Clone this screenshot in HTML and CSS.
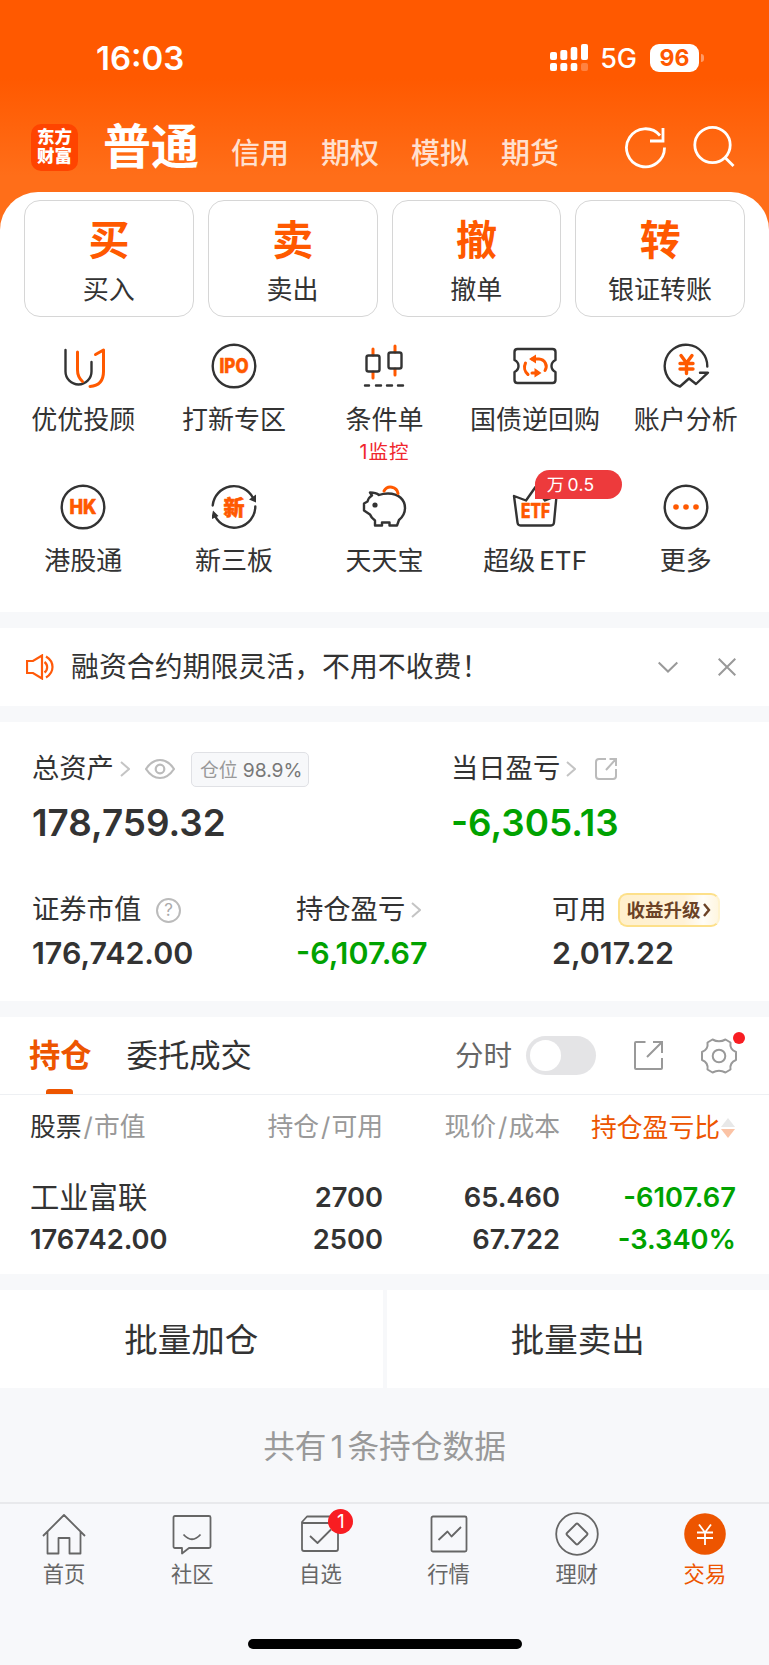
FILE: index.html
```html
<!DOCTYPE html>
<html lang="zh-CN">
<head>
    <meta charset="UTF-8">
    <meta name="viewport" content="width=device-width, initial-scale=1.0">
    <title>普通交易</title>
    <link rel="stylesheet" href="styles.css">
</head>
<body>
    <div class="header">
        <div class="status-bar">
            <div class="time">16:03</div>
            <div class="status-right">
                <svg class="signal" width="38" height="28" viewBox="0 0 38 28" fill="#fff">
                    <rect x="0" y="8" width="7" height="8" rx="2"/>
                    <rect x="10.3" y="6" width="7" height="10" rx="2"/>
                    <rect x="20.7" y="3" width="6.6" height="13" rx="2"/>
                    <rect x="31" y="0" width="7" height="16" rx="2"/>
                    <rect x="0" y="19" width="7" height="8" rx="2"/>
                    <rect x="10.3" y="19" width="7" height="8" rx="2"/>
                    <rect x="20.7" y="19" width="6.6" height="8" rx="2"/>
                    <rect x="31" y="19" width="7" height="8" rx="2" opacity="0.25"/>
                </svg>
                <span class="network">5G</span>
                <span class="battery">96</span>
                <span class="battery-cap"></span>
            </div>
        </div>
        <div class="nav">
            <div class="logo">东方<br>财富</div>
            <div class="nav-active">普通</div>
            <div class="nav-links">
                <span>信用</span>
                <span>期权</span>
                <span>模拟</span>
                <span>期货</span>
            </div>
            <div class="nav-icons">
                <svg width="44" height="44" viewBox="0 0 44 44" fill="none" stroke="#fff" stroke-width="2.8">
                    <path d="M41.5 22.5A19 19 0 1 1 37 10.5"/>
                    <path d="M40 3v13H27"/>
                </svg>
                <svg width="44" height="44" viewBox="0 0 44 44" fill="none" stroke="#fff" stroke-width="2.8">
                    <circle cx="20.5" cy="20" r="17.7"/>
                    <path d="M33 32.500l8.500 8.500"/>
                </svg>
            </div>
        </div>
    </div>

    <div class="panel">
        <div class="actions">
            <div class="action"><b>买</b><span>买入</span></div>
            <div class="action"><b>卖</b><span>卖出</span></div>
            <div class="action"><b>撤</b><span>撤单</span></div>
            <div class="action"><b>转</b><span>银证转账</span></div>
        </div>

        <div class="menu">
            <div class="menu-item">
                <svg class="icon" viewBox="0 0 48 48">
                    <path class="dark" d="M6.500 8v21.500a13 13 0 0 0 26 0V20"/>
                    <path class="orange" d="M18.500 10v18q0 7 5 11.500"/>
                    <path class="orange" d="M36.500 12.500l8-4.500v21.500q0 14-13.500 15"/>
                </svg>
                <span>优优投顾</span>
            </div>
            <div class="menu-item">
                <svg class="icon" viewBox="0 0 48 48">
                    <circle class="dark" cx="24" cy="24" r="21.300"/>
                    <text x="24" y="31" textLength="29" lengthAdjust="spacingAndGlyphs">IPO</text>
                </svg>
                <span>打新专区</span>
            </div>
            <div class="menu-item">
                <svg class="icon" viewBox="0 0 48 48">
                    <path class="orange" d="M13 7v6M13 30v6M35 4v6M35 27v6"/>
                    <rect class="dark" x="6.500" y="13.500" width="13" height="16" rx="2"/>
                    <rect class="dark" x="28.500" y="10.500" width="13" height="16" rx="2"/>
                    <path class="dark" d="M5 43.500h4M16 43.500h5M27 43.500h5M38 43.500h5"/>
                </svg>
                <span>条件单</span>
                <em>1监控</em>
            </div>
            <div class="menu-item">
                <svg class="icon" viewBox="0 0 48 48">
                    <path class="dark" d="M6.500 7h35q3 0 3 3v8q-4 2-4 6t4 6v8q0 3-3 3h-35q-3 0-3-3v-8q4-2 4-6t-4-6v-8q0-3 3-3z"/>
                    <path class="orange" d="M17 32.500a9.500 9.500 0 0 1-2.500-11.500M21 17h7a7.500 7.500 0 0 1 6 11.500M27 31h-6"/>
                    <path class="fill-orange" d="M18 17l7-4.500v9zM30.500 31l-7-5v9.500z"/>
                </svg>
                <span>国债逆回购</span>
            </div>
            <div class="menu-item">
                <svg class="icon" viewBox="0 0 48 48">
                    <path class="dark" d="M45.300 24.500A21.300 21.300 0 1 0 18 44.500L27 36.500l7 5.500 12-11.300h-8"/>
                    <path class="yen" d="M19 13.500l5.500 7.500 5.500-7.500M24.500 21v10.500M18 21.500h13M18 27h13"/>
                </svg>
                <span>账户分析</span>
            </div>
            <div class="menu-item">
                <svg class="icon" viewBox="0 0 48 48">
                    <circle class="dark" cx="24" cy="24" r="21.300"/>
                    <text x="24" y="31.200" textLength="27" lengthAdjust="spacingAndGlyphs">HK</text>
                </svg>
                <span>港股通</span>
            </div>
            <div class="menu-item">
                <svg class="icon" viewBox="0 0 48 48">
                    <path class="dark" d="M2.700 22.500A21.300 21.300 0 0 1 43 15M45.300 23.500A21.300 21.300 0 0 1 5 33"/>
                    <path class="fill-dark" d="M46 11.500v8l-7-3zM2 36v-3.500l1-5 5.500 5.500z"/>
                    <text x="24" y="31.500" class="cn">新</text>
                </svg>
                <span>新三板</span>
            </div>
            <div class="menu-item">
                <svg class="icon" viewBox="0 0 48 48">
                    <path class="dark" d="M10 9.500q6 0 9 2.500 4-1.500 9-1.500c11 0 17 6.500 17 14.500q0 7-6 12l-2 5.500h-7.500v-3H22v3h-7v-5q-4-3-5-6l-6-4v-7l3.500-2q1-4 4.500-6z"/>
                    <path class="orange" d="M24 8a7.500 7.500 0 0 1 14 2.500"/>
                    <circle class="fill-dark" cx="15" cy="22" r="2.600"/>
                </svg>
                <span>天天宝</span>
            </div>
            <div class="menu-item">
                <svg class="icon" viewBox="0 0 48 48">
                    <path class="dark" d="M3 13l12 4.500L24.500 4l9.500 13.500L45.500 13 43 39.500q-.3 3-3 3H9.500q-2.700 0-3-3z"/>
                    <text x="24.500" y="35.200" textLength="29" lengthAdjust="spacingAndGlyphs">ETF</text>
                </svg>
                <span>超级<u>ETF</u></span>
                <i class="tag">万<u>0.5</u></i>
            </div>
            <div class="menu-item">
                <svg class="icon" viewBox="0 0 48 48">
                    <circle class="dark" cx="24" cy="24" r="21.300"/>
                    <g class="fill-orange">
                        <circle cx="14" cy="24" r="2.800"/>
                        <circle cx="24" cy="24" r="2.800"/>
                        <circle cx="34" cy="24" r="2.800"/>
                    </g>
                </svg>
                <span>更多</span>
            </div>
        </div>
    </div>

    <div class="notice">
        <svg width="28" height="26" viewBox="0 0 28 26" fill="none" stroke="#ff5a0a" stroke-width="2.200">
            <path d="M1 7h6l9-5.500v23L7 19H1z"/>
            <path d="M18.500 8a6.500 6.500 0 0 1 0 10.500M20 2.500q6.500 4 6.500 10.500T20 23.500"/>
        </svg>
        <span class="notice-text">融资合约期限灵活，不用不收费！</span>
        <svg width="20" height="12" viewBox="0 0 20 12" fill="none" stroke="#999" stroke-width="2">
            <path d="M.7 1.500l9.300 9 9.300-9"/>
        </svg>
        <svg width="18" height="18" viewBox="0 0 18 18" fill="none" stroke="#999" stroke-width="2">
            <path d="M.7.700l16.600 16.600M17.300.700L.7 17.300"/>
        </svg>
    </div>

    <div class="assets">
        <div class="assets-top">
            <div>
                <div class="label">
                    总资产
                    <svg class="chevron" width="10" height="16" viewBox="0 0 10 16"><path d="M1 1l8 7-8 7"/></svg>
                    <svg class="eye" width="30" height="22" viewBox="0 0 30 22" fill="none" stroke="#bbb" stroke-width="2.200">
                        <path d="M1 11Q7 2 15 2t14 9q-6 9-14 9T1 11z"/>
                        <circle cx="15" cy="11" r="4.300"/>
                    </svg>
                    <span class="ratio">仓位 <b>98.9%</b></span>
                </div>
                <div class="value">178,759.32</div>
            </div>
            <div>
                <div class="label">
                    当日盈亏
                    <svg class="chevron" width="10" height="16" viewBox="0 0 10 16"><path d="M1 1l8 7-8 7"/></svg>
                    <svg class="share" width="22" height="22" viewBox="0 0 22 22" fill="none" stroke="#bbb" stroke-width="2">
                        <path d="M11 1H4Q1 1 1 4v14q0 3 3 3h14q3 0 3-3v-7M11 12L20.500 1.500M14.500 1H21v7"/>
                    </svg>
                </div>
                <div class="value green">-6,305.13</div>
            </div>
        </div>
        <div class="assets-bottom">
            <div>
                <div class="label">证券市值<span class="help">?</span></div>
                <div class="value">176,742.00</div>
            </div>
            <div>
                <div class="label">
                    持仓盈亏
                    <svg class="chevron" width="10" height="16" viewBox="0 0 10 16"><path d="M1 1l8 7-8 7"/></svg>
                </div>
                <div class="value green">-6,107.67</div>
            </div>
            <div>
                <div class="label">
                    可用
                    <span class="upgrade">收益升级<svg width="8" height="14" viewBox="0 0 8 14" fill="none" stroke="#6b4226" stroke-width="2.400"><path d="M1 1l5 6-5 6"/></svg></span>
                </div>
                <div class="value">2,017.22</div>
            </div>
        </div>
    </div>

    <div class="holdings">
        <div class="tabs">
            <div class="tab active">持仓</div>
            <div class="tab">委托成交</div>
            <div class="tools">
                <span>分时</span>
                <div class="switch"></div>
                <svg class="export" width="31" height="31" viewBox="0 0 31 31" fill="none" stroke="#999" stroke-width="2">
                    <path d="M12.500 2H3Q2 2 2 3v25q0 1 1 1h25q1 0 1-1V18M14 17L28.500 2.500M20 2h9v11"/>
                </svg>
                <div class="gear">
                    <svg width="36" height="36" viewBox="0 0 36 36" fill="none" stroke="#999" stroke-width="2">
                        <path d="M11.500 1.500Q18 5 24.500 1.500L29.500 4.500Q28.500 11.500 35 14v8Q28.500 24.500 29.500 31.500L24.500 34.500Q18 31 11.500 34.500L6.500 31.500Q7.500 24.500 1 22v-8Q7.500 11.500 6.500 4.500z" stroke-linejoin="round"/>
                        <circle cx="18" cy="18" r="6.300"/>
                    </svg>
                    <span class="dot"></span>
                </div>
            </div>
        </div>
        <div class="row head">
            <span><b>股票</b><u>/</u>市值</span>
            <span>持仓<u>/</u>可用</span>
            <span>现价<u>/</u>成本</span>
            <span class="sort">持仓盈亏比<svg width="16" height="22" viewBox="0 0 16 22"><path d="M8 1l7 9H1z" fill="#e8e8e8"/><path d="M1 12h14l-7 9z" fill="#fbc3a5"/></svg></span>
        </div>
        <div class="row stock">
            <div><span class="name">工业富联</span><span>176742.00</span></div>
            <div><span>2700</span><span>2500</span></div>
            <div><span>65.460</span><span>67.722</span></div>
            <div class="green"><span>-6107.67</span><span>-3.340%</span></div>
        </div>
    </div>

    <div class="batch">
        <div>批量加仓</div>
        <div>批量卖出</div>
    </div>

    <div class="count">共有<u>1</u>条持仓数据</div>

    <div class="tabbar">
        <div class="tabbar-item">
            <svg viewBox="0 0 44 44">
                <path d="M1 24L22 3l21 21M5.500 20v21.500h11V26h11v15.500h11V20"/>
            </svg>
            <span>首页</span>
        </div>
        <div class="tabbar-item">
            <svg viewBox="0 0 44 44">
                <path d="M5 4h34q1.500 0 1.500 1.500v29q0 1.500-1.500 1.500H19l-7 5.500V36H5q-1.500 0-1.500-1.500v-29Q3.500 4 5 4zM13.500 22.500q8.500 9.500 17 0"/>
            </svg>
            <span>社区</span>
        </div>
        <div class="tabbar-item">
            <svg viewBox="0 0 44 44">
                <path d="M4 10l5-5.500h26l5 5.500v27q0 2-2 2H6q-2 0-2-2zM4 11h36M12 24l7.500 7L33 17.500"/>
            </svg>
            <span>自选</span>
            <i class="count-badge">1</i>
        </div>
        <div class="tabbar-item">
            <svg viewBox="0 0 44 44">
                <rect x="4.500" y="4.500" width="35" height="35" rx="1.500"/>
                <path d="M11.500 28l9-8.500 4 5L34 15"/>
            </svg>
            <span>行情</span>
        </div>
        <div class="tabbar-item">
            <svg viewBox="0 0 44 44">
                <circle cx="22" cy="22" r="20.800"/>
                <path d="M21 12L12 21q-1 1 0 2l9 9q1 1 2 0l9-9q1-1 0-2l-9-9q-1-1-2 0z"/>
            </svg>
            <span>理财</span>
        </div>
        <div class="tabbar-item current">
            <svg viewBox="0 0 44 44">
                <circle cx="22" cy="22" r="20.800"/>
                <path d="M16 12.500l6 8 6-8M22 20v13M14 20.500h16M14 26h16"/>
            </svg>
            <span>交易</span>
        </div>
    </div>
    <div class="home-indicator"></div>
</body>
</html>
```

FILE: styles.css
```css
* {
    box-sizing: border-box;
}

body {
    margin: 0;
    height: 1665px;
    font-family: Inter, "Noto Sans CJK SC", sans-serif;
    color: #333;
    background: #f7f8fa;
    display: flex;
    flex-direction: column;
    overflow: hidden;
}

svg {
    display: block;
    flex: none;
}

b, i, em, u {
    font-weight: inherit;
    font-style: normal;
    text-decoration: none;
}

/* header */
.header {
    height: 232px;
    flex: none;
    background: linear-gradient(#ff5900 0, #ff5900 78px, #ff6e19 176px);
    color: #fff;
}

.status-bar {
    height: 115px;
    padding: 0 65px 0 96px;
    display: flex;
    justify-content: space-between;
    align-items: center;
}

.time {
    font-size: 33px;
    font-weight: 600;
}

.status-right {
    display: flex;
    align-items: center;
}

.network {
    font-size: 27px;
    font-weight: 500;
    line-height: 28px;
    margin: 3px 13px 0 12px;
}

.battery {
    width: 49px;
    height: 28px;
    line-height: 28px;
    border-radius: 9px;
    background: #fff;
    color: #ff5900;
    text-align: center;
    font-size: 23px;
    font-weight: 700;
}

.battery-cap {
    width: 3px;
    height: 8px;
    margin-left: 2px;
    border-radius: 0 3px 3px 0;
    background: #ff9a66;
}

.nav {
    height: 64px;
    padding: 0 31px;
    display: flex;
    align-items: center;
}

.logo {
    width: 47px;
    height: 47px;
    padding-top: 4px;
    border-radius: 10px;
    background: #ff4400;
    font-family: "Liberation Serif", "Noto Sans CJK SC", serif;
    font-size: 17.5px;
    font-weight: 900;
    line-height: 19.5px;
    text-align: center;
}

.nav-active {
    margin-left: 25px;
    font-size: 48px;
    font-weight: 700;
    line-height: 60px;
}

.nav-links {
    margin: 14px 0 0 32px;
    display: flex;
    gap: 32px;
    font-size: 29px;
    line-height: 36px;
    font-weight: 500;
    color: #ffe0cf;
}

.nav-icons {
    margin-left: auto;
    margin-right: 2px;
    display: flex;
    gap: 25px;
}

/* white sheet over the header */
.panel {
    height: 420px;
    flex: none;
    margin-top: -40px;
    padding: 8px 8px 0;
    border-radius: 38px 38px 0 0;
    background: #fff;
}

.actions {
    padding: 0 16px;
    display: grid;
    grid-template-columns: repeat(4, 1fr);
    gap: 14px;
}

.action {
    height: 117px;
    padding-top: 14px;
    border: 1px solid #d6d6d6;
    border-radius: 16px;
    display: flex;
    flex-direction: column;
    align-items: center;
}

.action b {
    font-size: 41px;
    font-weight: 700;
    line-height: 50px;
    color: #ff5900;
}

.action span {
    margin-top: 7px;
    font-size: 26px;
    line-height: 36px;
}

.menu {
    padding-top: 25px;
    display: grid;
    grid-template-columns: repeat(5, 1fr);
    grid-template-rows: 141px 110px;
}

.menu-item {
    position: relative;
    display: flex;
    flex-direction: column;
    align-items: center;
    font-size: 26px;
    line-height: 36px;
    white-space: nowrap;
}

.menu-item span {
    margin-top: 12px;
}

.menu-item span u {
    margin-left: 4px;
}

.menu-item em {
    margin-top: 1px;
    font-size: 19.5px;
    line-height: 26px;
    color: #f0262d;
    letter-spacing: 1px;
}

.icon {
    width: 48px;
    height: 48px;
    fill: none;
    stroke-linecap: round;
    stroke-linejoin: round;
}

.icon .dark {
    stroke: #333;
    stroke-width: 2.4;
}

.icon .orange {
    stroke: #ff5900;
    stroke-width: 3;
}

.icon .yen {
    stroke: #ff5900;
    stroke-width: 3.4;
}

.icon .fill-orange,
.icon text {
    fill: #ff5900;
}

.icon .fill-dark {
    fill: #333;
}

.icon text {
    font-size: 20px;
    font-weight: 800;
    text-anchor: middle;
    stroke: #ff5900;
    stroke-width: 0.6;
}

.icon text.cn {
    font-size: 21px;
}

.tag {
    position: absolute;
    left: 75px;
    top: -13px;
    width: 87px;
    height: 29px;
    padding-left: 12px;
    border-radius: 15px 15px 15px 0;
    background: #ed3a3c;
    color: #fff;
    font-size: 17.5px;
    line-height: 30px;
    letter-spacing: 0.3px;
}

.tag u {
    margin-left: 3px;
}

/* notice */
.notice {
    height: 78px;
    flex: none;
    margin-top: 16px;
    padding: 0 33px 0 26px;
    background: #fff;
    display: flex;
    align-items: center;
}

.notice-text {
    flex: 1;
    margin-left: 17px;
    font-size: 27.9px;
    line-height: 34px;
}

.notice svg:last-child {
    margin-left: 40px;
}

/* assets */
.assets {
    height: 279px;
    flex: none;
    margin-top: 16px;
    padding: 27px 32px 0;
    background: #fff;
}

.assets-top {
    display: grid;
    grid-template-columns: 419px 1fr;
}

.assets-bottom {
    margin-top: 44px;
    display: grid;
    grid-template-columns: 264px 256px 1fr;
}

.label {
    height: 40px;
    display: flex;
    align-items: center;
    font-size: 27.3px;
    line-height: 40px;
    white-space: nowrap;
}

.value {
    font-weight: 600;
}

.assets-top .value {
    margin-top: 11px;
    font-size: 36.8px;
    line-height: 46px;
}

.assets-bottom .value {
    margin-top: 3px;
    font-size: 30.4px;
    line-height: 40px;
}

.green {
    color: #00a200;
}

.chevron {
    margin-left: 6px;
    fill: none;
    stroke: #c4c4c4;
    stroke-width: 2;
}

.eye {
    margin-left: 15px;
}

.ratio {
    height: 35px;
    margin-left: 16px;
    padding: 0 5px 0 8px;
    border: 1px solid #e0e1e5;
    border-radius: 5px;
    background: #f7f8fa;
    color: #999;
    font-size: 18.8px;
    line-height: 34px;
}

.ratio b {
    color: #777;
    font-size: 19.3px;
}

.share {
    margin-left: 19px;
}

.help {
    width: 25px;
    height: 25px;
    margin-left: 15px;
    border: 2px solid #bbb;
    border-radius: 50%;
    color: #aaa;
    font-size: 17px;
    line-height: 21px;
    text-align: center;
}

.upgrade {
    height: 34px;
    margin-left: 11px;
    padding: 0 7px;
    border: 2px solid #fde08a;
    border-right-color: #fff3cf;
    border-radius: 9px;
    background: linear-gradient(90deg, #fff0cc, #fff2d8 65%, #fffdf8 85%, #fff6e0);
    color: #6b4226;
    display: flex;
    align-items: center;
    gap: 2px;
    font-size: 18.5px;
    font-weight: 700;
}

/* holdings */
.holdings {
    height: 257px;
    flex: none;
    margin-top: 16px;
    background: #fff;
}

.tabs {
    height: 78px;
    padding: 0 32px 0 29px;
    border-bottom: 1px solid #eef0f3;
    display: flex;
    font-size: 31.3px;
    line-height: 79px;
}

.tab {
    margin-right: 35px;
}

.tab.active {
    position: relative;
    color: #ed5500;
    font-weight: 700;
}

.tab.active::after {
    content: "";
    position: absolute;
    left: 17px;
    bottom: 0;
    width: 27px;
    height: 5px;
    border-radius: 3px 3px 0 0;
    background: #ed5500;
}

.tools {
    margin-left: auto;
    display: flex;
    align-items: center;
    color: #666;
    font-size: 28.5px;
}

.switch {
    width: 70px;
    height: 39px;
    margin-left: 14px;
    padding: 4px;
    border-radius: 20px;
    background: #e4e4e6;
}

.switch::before {
    content: "";
    display: block;
    width: 31px;
    height: 31px;
    border-radius: 50%;
    background: #fff;
}

.export {
    margin-left: 37px;
}

.gear {
    position: relative;
    margin-left: 37px;
}

.dot {
    position: absolute;
    right: -8px;
    top: -6px;
    width: 12px;
    height: 12px;
    border-radius: 50%;
    background: #f81d22;
}

.row {
    padding: 0 33px 0 30px;
    display: grid;
    grid-template-columns: 176px 177px 177px 1fr;
    text-align: right;
    white-space: nowrap;
}

.row > :first-child {
    text-align: left;
}

.head {
    height: 65px;
    color: #999;
    font-size: 25.8px;
    line-height: 64px;
}

.head b {
    color: #333;
}

.head u {
    padding: 0 1px 0 2px;
}

.head .sort {
    display: flex;
    justify-content: flex-end;
    align-items: center;
    color: #ed5500;
}

.stock {
    padding-top: 17px;
    font-size: 27.3px;
    font-weight: 600;
    line-height: 42px;
}

.stock span {
    display: block;
}

.stock .name {
    font-size: 29.3px;
    font-weight: 400;
}

/* batch */
.batch {
    height: 98px;
    flex: none;
    margin-top: 16px;
    display: grid;
    grid-template-columns: 1fr 1fr;
    gap: 4px;
    font-size: 33.5px;
    line-height: 98px;
    text-align: center;
}

.batch div {
    background: #fff;
    padding-top: 1px;
    height: 98px;
}

.count {
    height: 114px;
    flex: none;
    color: #999;
    font-size: 31.7px;
    line-height: 118px;
    text-align: center;
}

.count u {
    padding: 0 4px;
}

/* bottom bar */
.tabbar {
    height: 137px;
    flex: none;
    padding-top: 8px;
    border-top: 2px solid #e8e9ec;
    background: #f7f8fb;
    display: grid;
    grid-template-columns: repeat(6, 1fr);
}

.tabbar-item {
    position: relative;
    display: flex;
    flex-direction: column;
    align-items: center;
    color: #666;
    font-size: 21.3px;
    line-height: 30px;
}

.tabbar-item svg {
    width: 44px;
    height: 44px;
    margin-bottom: 3px;
    fill: none;
    stroke: #666;
    stroke-width: 1.8;
    stroke-linejoin: round;
}

.tabbar-item.current {
    color: #ed5500;
}

.current circle {
    fill: #ed5500;
    stroke: none;
}

.current path {
    stroke: #fff;
}

.count-badge {
    position: absolute;
    left: 72px;
    top: -3px;
    width: 25px;
    height: 25px;
    border-radius: 50%;
    background: #f81d22;
    color: #fff;
    font-size: 19px;
    line-height: 26px;
    text-align: center;
}

.home-indicator {
    width: 274px;
    height: 10px;
    flex: none;
    align-self: center;
    border-radius: 5px;
    background: #000;
}
```
